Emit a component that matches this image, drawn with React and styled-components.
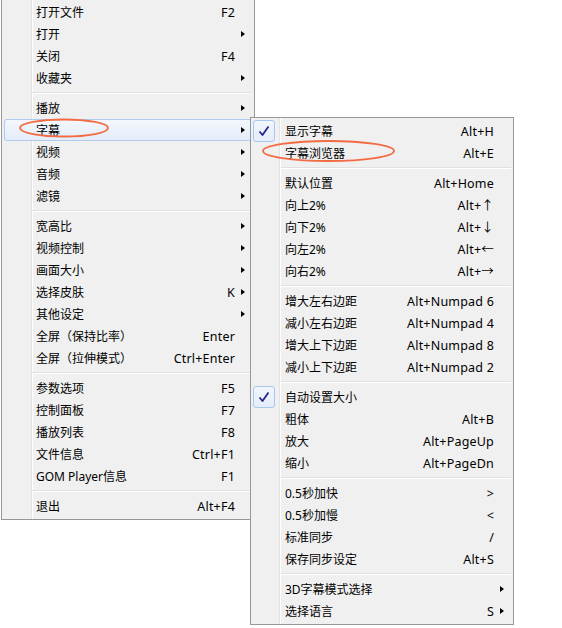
import styled, { createGlobalStyle, css } from "styled-components";

const GlobalStyle = createGlobalStyle`
  html, body {
    margin: 0;
    padding: 0;
    background: #fff;
  }
  body {
    font-family: "Noto Sans", "Noto Sans CJK SC", sans-serif;
    font-size: 12px;
    color: #000;
  }
`;

const BORDER = "#979797";
const MENU_BG = "#f0f0f0";
const MARK = "#f26b43";

const Screen = styled.div`
  position: relative;
  width: 562px;
  height: 628px;
  overflow: hidden;
`;

const Menu = styled.div`
  box-sizing: border-box;
  width: ${({ $width }) => $width}px;
  padding: 2px;
  border: 1px solid ${BORDER};
  background-color: ${MENU_BG};
  background-image: linear-gradient(#e2e3e3, #e2e3e3), linear-gradient(#fff, #fff);
  background-size: 1px 100%, 1px 100%;
  background-position: ${({ $gutter }) => `${$gutter}px 0, ${$gutter + 1}px 0`};
  background-repeat: no-repeat;
`;

const MainMenu = styled(Menu)`
  margin: -2px 0 0 1px;
`;

const SubMenu = styled(Menu)`
  position: absolute;
  left: 250px;
  top: 117px;
`;

const Item = styled.div`
  display: flex;
  align-items: center;
  box-sizing: border-box;
  height: 22px;
  padding-top: 2px;
  border-radius: 3px;
  line-height: 20px;
  white-space: nowrap;
  ${({ $active }) =>
    $active &&
    css`
      box-shadow: inset 0 0 0 1px #aecbee;
      background: linear-gradient(#f4f8fd, #e3ecf9);
    `}
`;

const Gutter = styled.div`
  width: 32px;
  height: 22px;
  margin-top: -2px;
  flex: none;
`;

const CheckBox = styled.div`
  width: 22px;
  height: 22px;
  box-sizing: border-box;
  border: 1px solid #a7c7ee;
  border-radius: 3px;
  background: linear-gradient(#f1f6fd, #e4edf9);
  display: flex;
  align-items: center;
  justify-content: center;
`;

const Label = styled.span`
  flex: 1;
`;

const Shortcut = styled.span`
  flex: none;
  font-size: 12.5px;
  letter-spacing: 0.2px;
`;

const ArrowSlot = styled.div`
  width: 17px;
  height: 20px;
  flex: none;
  display: flex;
  align-items: center;
  padding-left: 6px;
  margin-top: -2px;
  box-sizing: border-box;
`;

const Arrow = styled.span`
  width: 0;
  height: 0;
  border-top: 3.5px solid transparent;
  border-bottom: 3.5px solid transparent;
  border-left: 4px solid #000;
`;

const Separator = styled.div`
  height: 1px;
  margin: 3px 0 3px 28px;
  background: #e0e0e0;
  border-bottom: 1px solid #fff;
`;

const Marks = styled.svg`
  position: absolute;
  left: 0;
  top: 0;
  pointer-events: none;
`;

const mainItems = [
  ["打开文件", "F2"],
  ["打开", "", true],
  ["关闭", "F4"],
  ["收藏夹", "", true],
  null,
  ["播放", "", true],
  ["字幕", "", true, "active"],
  ["视频", "", true],
  ["音频", "", true],
  ["滤镜", "", true],
  null,
  ["宽高比", "", true],
  ["视频控制", "", true],
  ["画面大小", "", true],
  ["选择皮肤", "K", true],
  ["其他设定", "", true],
  ["全屏（保持比率）", "Enter"],
  ["全屏（拉伸模式）", "Ctrl+Enter"],
  null,
  ["参数选项", "F5"],
  ["控制面板", "F7"],
  ["播放列表", "F8"],
  ["文件信息", "Ctrl+F1"],
  ["GOM Player信息", "F1"],
  null,
  ["退出", "Alt+F4"],
];

const subItems = [
  ["显示字幕", "Alt+H", false, "checked"],
  ["字幕浏览器", "Alt+E"],
  null,
  ["默认位置", "Alt+Home"],
  ["向上2%", "Alt+↑"],
  ["向下2%", "Alt+↓"],
  ["向左2%", "Alt+←"],
  ["向右2%", "Alt+→"],
  null,
  ["增大左右边距", "Alt+Numpad 6"],
  ["减小左右边距", "Alt+Numpad 4"],
  ["增大上下边距", "Alt+Numpad 8"],
  ["减小上下边距", "Alt+Numpad 2"],
  null,
  ["自动设置大小", "", false, "checked"],
  ["粗体", "Alt+B"],
  ["放大", "Alt+PageUp"],
  ["缩小", "Alt+PageDn"],
  null,
  ["0.5秒加快", ">"],
  ["0.5秒加慢", "<"],
  ["标准同步", "/"],
  ["保存同步设定", "Alt+S"],
  null,
  ["3D字幕模式选择", "", true],
  ["选择语言", "S", true],
];

const Check = () => (
  <svg width="14" height="14" viewBox="0 0 14 14">
    <path d="M2.5 7.5 L5.5 11 L11.5 2.5" fill="none" stroke="#23258f" strokeWidth="1.8" strokeLinejoin="round" />
  </svg>
);

const renderItems = (items) =>
  items.map((it, i) => {
    if (!it) return <Separator key={i} />;
    const [label, shortcut, sub, state] = it;
    return (
      <Item key={i} $active={state === "active"}>
        <Gutter>
          {state === "checked" && (
            <CheckBox>
              <Check />
            </CheckBox>
          )}
        </Gutter>
        <Label>{label}</Label>
        <Shortcut>{shortcut}</Shortcut>
        <ArrowSlot>{sub && <Arrow />}</ArrowSlot>
      </Item>
    );
  });

export default function App() {
  return (
    <Screen>
      <GlobalStyle />
      <MainMenu $width={254} $gutter={29}>
        {renderItems(mainItems)}
      </MainMenu>
      <SubMenu $width={264} $gutter={28}>
        {renderItems(subItems)}
      </SubMenu>
      <Marks width="562" height="628">
        <ellipse cx="64" cy="128" rx="44" ry="8.5" fill="none" stroke={MARK} strokeWidth="1.8" />
        <ellipse cx="328.5" cy="151" rx="65.5" ry="10" fill="none" stroke={MARK} strokeWidth="1.8" />
      </Marks>
    </Screen>
  );
}
